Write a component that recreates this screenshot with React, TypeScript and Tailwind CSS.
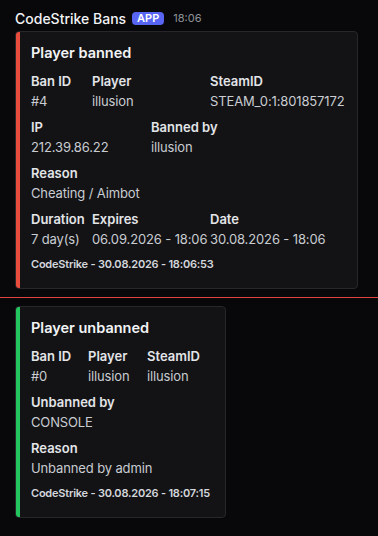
import React from "react";

interface Field {
  name: string;
  value: string;
}

interface EmbedProps {
  color: string;
  title: string;
  rows: { cols: string; fields: Field[] }[];
  footer: string;
  width: string;
}

const Embed = ({ color, title, rows, footer, width }: EmbedProps) => {
  return (
    <div
      className={`flex rounded-[4px] border border-[#26262b] bg-[#131316] overflow-hidden ${width}`}
    >
      <div className={`w-[4px] shrink-0 ${color}`} />
      <div className="pt-[10px] pb-[16px] pl-[11px] pr-[15px] flex-1">
        <div className="text-[14.5px] leading-[22px] font-semibold text-[#f2f3f5]">
          {title}
        </div>
        <div className="mt-[8px] flex flex-col gap-[8px]">
          {rows.map((row, i) => (
            <div key={i} className={`grid ${row.cols}`}>
              {row.fields.map((f) => (
                <div key={f.name} className="min-w-0">
                  <div className="text-[13px] leading-[18px] font-semibold text-[#e3e5e8] mb-[2px] whitespace-nowrap">
                    {f.name}
                  </div>
                  <div className="text-[13px] leading-[18px] tracking-[-0.01em] text-[#c9ccd1] whitespace-nowrap">
                    {f.value}
                  </div>
                </div>
              ))}
            </div>
          ))}
          <div className="text-[11px] leading-[16px] font-semibold tracking-[-0.02em] text-[#d4d7dc] whitespace-nowrap">
            {footer}
          </div>
        </div>
      </div>
    </div>
  );
};

const App = () => {
  return (
    <div
      className="min-h-[536px] w-full bg-[#08080a] text-white"
      style={{ fontFamily: "Inter, 'Noto Sans', sans-serif" }}
    >
      <div className="px-[15px] pt-[7px]">
        <div className="flex items-center h-[22px]">
          <span className="text-[14px] font-medium text-[#f2f3f5]">
            CodeStrike Bans
          </span>
          <span className="ml-[6px] bg-[#5865f2] text-white text-[11px] font-semibold rounded-[4px] px-[5px] h-[13px] leading-[13px] flex items-center">
            APP
          </span>
          <span className="ml-[9px] text-[11px] text-[#8e9297]">18:06</span>
        </div>
        <div className="mt-[2px]">
          <Embed
            color="bg-[#e74c3c]"
            title="Player banned"
            width="w-[343px]"
            footer="CodeStrike - 30.08.2026 - 18:06:53"
            rows={[
              {
                cols: "grid-cols-[61px_118px_1fr]",
                fields: [
                  { name: "Ban ID", value: "#4" },
                  { name: "Player", value: "illusion" },
                  { name: "SteamID", value: "STEAM_0:1:801857172" },
                ],
              },
              {
                cols: "grid-cols-[120px_1fr]",
                fields: [
                  { name: "IP", value: "212.39.86.22" },
                  { name: "Banned by", value: "illusion" },
                ],
              },
              {
                cols: "grid-cols-1",
                fields: [{ name: "Reason", value: "Cheating / Aimbot" }],
              },
              {
                cols: "grid-cols-[61px_118px_1fr]",
                fields: [
                  { name: "Duration", value: "7 day(s)" },
                  { name: "Expires", value: "06.09.2026 - 18:06" },
                  { name: "Date", value: "30.08.2026 - 18:06" },
                ],
              },
            ]}
          />
        </div>
      </div>
      <div className="mt-[8px] h-px w-full bg-[#e0443f]" />
      <div className="px-[15px] pt-[8px] pb-[19px]">
        <Embed
          color="bg-[#23c55e]"
          title="Player unbanned"
          width="w-[211px]"
          footer="CodeStrike - 30.08.2026 - 18:07:15"
          rows={[
            {
              cols: "grid-cols-[57px_59px_1fr]",
              fields: [
                { name: "Ban ID", value: "#0" },
                { name: "Player", value: "illusion" },
                { name: "SteamID", value: "illusion" },
              ],
            },
            {
              cols: "grid-cols-1",
              fields: [{ name: "Unbanned by", value: "CONSOLE" }],
            },
            {
              cols: "grid-cols-1",
              fields: [{ name: "Reason", value: "Unbanned by admin" }],
            },
          ]}
        />
      </div>
    </div>
  );
};

export default App;
